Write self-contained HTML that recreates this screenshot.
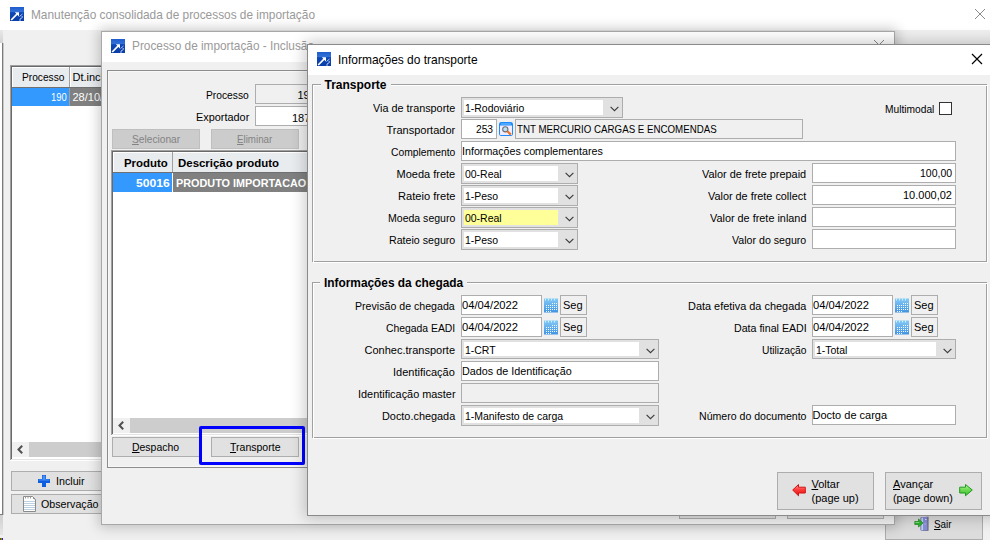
<!DOCTYPE html>
<html><head><meta charset="utf-8"><style>
html,body{margin:0;padding:0;width:990px;height:540px;overflow:hidden;background:#f0f0f0;}
body{position:relative;font-family:"Liberation Sans",sans-serif;}
.a{position:absolute;box-sizing:border-box;}
.t{position:absolute;white-space:nowrap;line-height:20px;transform-origin:0 0;}
u{text-decoration:underline;text-underline-offset:1px;}
</style></head><body>
<div class="a" style="left:0px;top:0px;width:990px;height:30px;background:#ffffff;"></div>
<div class="a" style="left:0px;top:30px;width:990px;height:510px;background:#f0f0f0;"></div>
<svg class="a" style="left:10px;top:7px" width="14" height="14" viewBox="0 0 14 14"><defs><linearGradient id="ig" x1="0" y1="0" x2="0" y2="1"><stop offset="0" stop-color="#1f5ccc"/><stop offset=".35" stop-color="#3472d8"/><stop offset=".4" stop-color="#0d47b5"/><stop offset="1" stop-color="#0a3ea6"/></linearGradient></defs><rect width="14" height="14" fill="url(#ig)"/><path d="M1.2 13 L7.5 6.7" stroke="#fff" stroke-width="1.7"/><path d="M4.8 5.2 H9 V9.4 Z" fill="#fff"/><path d="M9.5 9.5 l3 -2.5 M10 12 l2.5 -1.5 M9 13 h2 M11.5 9.8 l1.5 0" stroke="#c5d3f5" stroke-width="1" opacity=".9"/></svg>
<div class="t" style="left:30.5px;top:5px;font-size:13px;color:#9a9a9a;transform:scaleX(0.9117);">Manutenção consolidada de processos de importação</div>
<svg class="a" style="left:974.0px;top:8.0px" width="12" height="12"><path d="M1 1 L11 11 M11 1 L1 11" stroke="#8a8a8a" stroke-width="1"/></svg>
<div class="a" style="left:0px;top:30px;width:3px;height:13px;background:linear-gradient(#e8e8e8,#d4d4d4);"></div>
<div class="a" style="left:0px;top:43px;width:2px;height:472px;background:#ffffff;"></div>
<div class="a" style="left:2px;top:43px;width:1px;height:472px;background:#7a7a7a;"></div>
<div class="a" style="left:3px;top:43px;width:1px;height:472px;background:#c8c8c8;"></div>
<div class="a" style="left:0px;top:514px;width:3px;height:1px;background:#7a7a7a;"></div>
<div class="a" style="left:0px;top:515px;width:3px;height:20px;background:linear-gradient(#cfcfcf,#e6e6e6);"></div>
<div class="a" style="left:0px;top:538px;width:1px;height:2px;background:#e02020;"></div>
<div class="a" style="left:1px;top:538px;width:1px;height:2px;background:#20c020;"></div>
<div class="a" style="left:2px;top:538px;width:1px;height:2px;background:#2020e0;"></div>
<div class="a" style="left:10px;top:65px;width:110px;height:396px;background:#fff;"></div>
<div class="a" style="left:10px;top:65px;width:110px;height:1px;background:#a0a0a0;"></div>
<div class="a" style="left:10px;top:65px;width:1px;height:396px;background:#a0a0a0;"></div>
<div class="a" style="left:11px;top:66px;width:108px;height:1px;background:#696969;"></div>
<div class="a" style="left:11px;top:66px;width:1px;height:394px;background:#696969;"></div>
<div class="a" style="left:10px;top:460px;width:110px;height:1px;background:#ffffff;"></div>
<div class="a" style="left:119px;top:65px;width:1px;height:396px;background:#ffffff;"></div>
<div class="a" style="left:11px;top:459px;width:108px;height:1px;background:#e3e3e3;"></div>
<div class="a" style="left:118px;top:66px;width:1px;height:394px;background:#e3e3e3;"></div>
<div class="a" style="left:12px;top:67px;width:89px;height:21px;background:#e9ecef;"></div>
<div class="a" style="left:12px;top:67px;width:89px;height:1px;background:#fff;"></div>
<div class="a" style="left:12px;top:67px;width:1px;height:21px;background:#fff;"></div>
<div class="a" style="left:69px;top:67px;width:1px;height:21px;background:#a0a0a0;"></div>
<div class="a" style="left:70px;top:67px;width:1px;height:21px;background:#fff;"></div>
<div class="a" style="left:12px;top:87px;width:89px;height:1px;background:#707070;"></div>
<div class="t" style="left:22.0px;top:67px;font-size:11px;color:#000;transform:scaleX(0.9259);">Processo</div>
<div class="t" style="left:72.5px;top:67px;font-size:11px;color:#000;">Dt.inclusão</div>
<div class="a" style="left:12px;top:88px;width:57px;height:18px;background:#3399ff;"></div>
<div class="a" style="left:70px;top:88px;width:31px;height:18px;background:#808080;"></div>
<div class="a" style="left:69px;top:88px;width:1px;height:18px;background:#a0a0a0;"></div>
<div class="t" style="left:50.5px;top:87px;font-size:11px;color:#fff;transform:scaleX(0.8533);">190</div>
<div class="t" style="left:72.5px;top:87px;font-size:11px;color:#fff;">28/10/2022</div>
<div class="a" style="left:12px;top:442px;width:89px;height:15px;background:#f0f0f0;"></div>
<div class="a" style="left:29px;top:442px;width:72px;height:15px;background:#cdcdcd;"></div>
<svg class="a" style="left:17px;top:445px" width="6" height="9"><path d="M5.2 0.8 L1.5 4.5 L5.2 8.2" fill="none" stroke="#505050" stroke-width="2"/></svg>
<div class="a" style="left:11px;top:471px;width:99px;height:20px;background:#e1e1e1;box-shadow:inset 0 0 0 1px #adadad;"></div>
<svg class="a" style="left:38px;top:475px" width="12" height="12" viewBox="0 0 12 12"><path d="M4 0 H8 V4 H12 V8 H8 V12 H4 V8 H0 V4 H4 Z" fill="#0d5fe0"/><path d="M4.6 0.6 H7.4 V4.6 H11.4 V5.6 H0.6 V4.6 H4.6 Z" fill="#4a8ef0"/></svg>
<div class="t" style="left:55.5px;top:471px;font-size:11px;color:#000;transform:scaleX(0.9727);">Incluir</div>
<div class="a" style="left:11px;top:494px;width:99px;height:20px;background:#e1e1e1;box-shadow:inset 0 0 0 1px #adadad;"></div>
<svg class="a" style="left:23px;top:496px" width="14" height="17" viewBox="0 0 14 17"><path d="M0.5 0.5 H9.5 L12.5 3.5 V15.5 H0.5 Z" fill="#fff" stroke="#8a8a8a"/><path d="M1 5.5h11 M1 7.5h11 M1 9.5h11 M1 11.5h11 M1 13.5h11" stroke="#bcd0e2" stroke-width="1"/><path d="M2.5 0.5 v2 M5 0.5 v2 M7.5 0.5 v2 M10 2 l1.5 1.5" stroke="#9a9a9a" stroke-width="1"/></svg>
<div class="t" style="left:40.5px;top:494px;font-size:11px;color:#000;transform:scaleX(0.9696);">Observação</div>
<div class="a" style="left:885px;top:515px;width:98px;height:25px;background:#dcdcdc;box-shadow:inset 0 0 0 1px #adadad;"></div>
<svg class="a" style="left:914px;top:516px" width="17" height="16" viewBox="0 0 17 16"><path d="M6.5 1.5 L14.5 0.8 V14.8 L7.5 15 L6.5 14 Z" fill="#5a5a6e"/><path d="M7 1.2 L13.5 0.8 V14.2 L7 15 Z" fill="#8a8fd6"/><path d="M7.5 2 L9 1.8 V14 L7.5 14.5 Z" fill="#b9d8f5"/><rect x="11" y="3" width="1.6" height=".9" fill="#e0e4ff"/><rect x="10.5" y="7.5" width="1" height="1" fill="#d0d4f0"/><path d="M0.8 5.5 H4.5 V3 L9 7 L4.5 11 V8.5 H0.8 Z" fill="#2fb52f" stroke="#178a17" stroke-width=".7"/><path d="M1.5 6.5 H5.2" stroke="#8fe88f" stroke-width=".8"/></svg>
<div class="t" style="left:934.0px;top:514px;font-size:11px;color:#000;transform:scaleX(0.8980);"><u>S</u>air</div>
<div class="a" style="left:101px;top:31px;width:794px;height:494px;box-shadow:0 0 12px 2px rgba(0,0,0,.22)"></div>
<div class="a" style="left:101px;top:31px;width:794px;height:494px;background:#f0f0f0;box-shadow:inset 0 0 0 1px #a8a8a8;"></div>
<div class="a" style="left:102px;top:32px;width:792px;height:30px;background:#ffffff;"></div>
<svg class="a" style="left:111px;top:39px" width="14" height="14" viewBox="0 0 14 14"><defs><linearGradient id="ig" x1="0" y1="0" x2="0" y2="1"><stop offset="0" stop-color="#1f5ccc"/><stop offset=".35" stop-color="#3472d8"/><stop offset=".4" stop-color="#0d47b5"/><stop offset="1" stop-color="#0a3ea6"/></linearGradient></defs><rect width="14" height="14" fill="url(#ig)"/><path d="M1.2 13 L7.5 6.7" stroke="#fff" stroke-width="1.7"/><path d="M4.8 5.2 H9 V9.4 Z" fill="#fff"/><path d="M9.5 9.5 l3 -2.5 M10 12 l2.5 -1.5 M9 13 h2 M11.5 9.8 l1.5 0" stroke="#c5d3f5" stroke-width="1" opacity=".9"/></svg>
<div class="t" style="left:131.5px;top:36px;font-size:13px;color:#9a9a9a;transform:scaleX(0.9092);">Processo de importação - Inclusão</div>
<svg class="a" style="left:873.0px;top:39.0px" width="12" height="12"><path d="M1 1 L11 11 M11 1 L1 11" stroke="#888" stroke-width="1"/></svg>
<div class="a" style="left:107px;top:70px;width:782px;height:398px;box-shadow:inset 0 0 0 1px #8c8c8c;"></div>
<div class="a" style="left:108px;top:71px;width:781px;height:396px;box-shadow:inset 0 0 0 1px #f8f8f8;"></div>
<div class="t" style="left:206.0px;top:85px;font-size:11px;color:#000;transform:scaleX(0.9314);">Processo</div>
<div class="a" style="left:255px;top:84px;width:145px;height:20px;background:#f0f0f0;box-shadow:inset 0 0 0 1px #adadad;"></div>
<div class="t" style="left:297.5px;top:85px;font-size:11px;color:#000;">190</div>
<div class="t" style="left:195.5px;top:107px;font-size:11px;color:#000;transform:scaleX(0.9898);">Exportador</div>
<div class="a" style="left:255px;top:106px;width:145px;height:20px;background:#ffffff;box-shadow:inset 0 0 0 1px #adadad;"></div>
<div class="t" style="left:292.0px;top:108px;font-size:11px;color:#000;">187</div>
<div class="a" style="left:112px;top:129px;width:88px;height:20px;background:#cccccc;box-shadow:inset 0 0 0 1px #bfbfbf;"></div>
<div class="t" style="left:132.0px;top:129px;font-size:11px;color:#838383;transform:scaleX(0.9269);"><u>S</u>elecionar</div>
<div class="a" style="left:211px;top:129px;width:88px;height:20px;background:#cccccc;box-shadow:inset 0 0 0 1px #bfbfbf;"></div>
<div class="t" style="left:237.0px;top:129px;font-size:11px;color:#838383;transform:scaleX(0.8866);"><u>E</u>liminar</div>
<div class="a" style="left:111px;top:150px;width:778px;height:286px;background:#fff;"></div>
<div class="a" style="left:111px;top:150px;width:778px;height:1px;background:#a0a0a0;"></div>
<div class="a" style="left:111px;top:150px;width:1px;height:286px;background:#a0a0a0;"></div>
<div class="a" style="left:112px;top:151px;width:776px;height:1px;background:#696969;"></div>
<div class="a" style="left:112px;top:151px;width:1px;height:284px;background:#696969;"></div>
<div class="a" style="left:111px;top:435px;width:778px;height:1px;background:#ffffff;"></div>
<div class="a" style="left:888px;top:150px;width:1px;height:286px;background:#ffffff;"></div>
<div class="a" style="left:112px;top:434px;width:776px;height:1px;background:#e3e3e3;"></div>
<div class="a" style="left:887px;top:151px;width:1px;height:284px;background:#e3e3e3;"></div>
<div class="a" style="left:113px;top:152px;width:776px;height:21px;background:#e9ecef;"></div>
<div class="a" style="left:113px;top:152px;width:776px;height:1px;background:#fff;"></div>
<div class="a" style="left:113px;top:152px;width:1px;height:21px;background:#fff;"></div>
<div class="a" style="left:172px;top:152px;width:1px;height:21px;background:#a0a0a0;"></div>
<div class="a" style="left:113px;top:172px;width:776px;height:1px;background:#707070;"></div>
<div class="t" style="left:124.0px;top:153px;font-size:11px;color:#000;font-weight:bold;transform:scaleX(1.0379);">Produto</div>
<div class="t" style="left:178.0px;top:153px;font-size:11px;color:#000;font-weight:bold;transform:scaleX(1.0401);">Descrição produto</div>
<div class="a" style="left:113px;top:173px;width:59px;height:19px;background:#3399ff;"></div>
<div class="a" style="left:173px;top:173px;width:716px;height:19px;background:#808080;"></div>
<div class="t" style="left:136.0px;top:173px;font-size:11px;color:#fff;font-weight:bold;transform:scaleX(1.1013);">50016</div>
<div class="t" style="left:175.5px;top:173px;font-size:11px;color:#fff;font-weight:bold;transform:scaleX(0.9850);">PRODUTO IMPORTACAO</div>
<div class="a" style="left:113px;top:418px;width:776px;height:15px;background:#f0f0f0;"></div>
<div class="a" style="left:130px;top:418px;width:759px;height:15px;background:#cdcdcd;"></div>
<svg class="a" style="left:118px;top:421px" width="6" height="9"><path d="M5.2 0.8 L1.5 4.5 L5.2 8.2" fill="none" stroke="#505050" stroke-width="2"/></svg>
<div class="a" style="left:112px;top:437px;width:88px;height:20px;background:#e1e1e1;box-shadow:inset 0 0 0 1px #adadad;"></div>
<div class="t" style="left:132.0px;top:437px;font-size:11px;color:#000;transform:scaleX(0.9495);"><u>D</u>espacho</div>
<div class="a" style="left:211px;top:437px;width:88px;height:20px;background:#e1e1e1;box-shadow:inset 0 0 0 1px #adadad;"></div>
<div class="t" style="left:229.5px;top:437px;font-size:11px;color:#000;transform:scaleX(0.9564);"><u>T</u>ransporte</div>
<div class="a" style="left:199px;top:426px;width:106px;height:39px;box-shadow:inset 0 0 0 3px #0000ff;border-radius:2px;"></div>
<div class="a" style="left:679px;top:500px;width:97px;height:19px;background:#e1e1e1;box-shadow:inset 0 0 0 1px #adadad;"></div>
<div class="a" style="left:787px;top:500px;width:97px;height:19px;background:#e1e1e1;box-shadow:inset 0 0 0 1px #adadad;"></div>
<div class="a" style="left:307px;top:44px;width:700px;height:472px;box-shadow:0 0 14px 2px rgba(0,0,0,.22)"></div>
<div class="a" style="left:307px;top:44px;width:693px;height:472px;background:#f0f0f0;box-shadow:inset 0 0 0 1px #8a8a8a;"></div>
<div class="a" style="left:308px;top:45px;width:682px;height:30px;background:#ffffff;"></div>
<svg class="a" style="left:317px;top:52px" width="14" height="14" viewBox="0 0 14 14"><defs><linearGradient id="ig" x1="0" y1="0" x2="0" y2="1"><stop offset="0" stop-color="#1f5ccc"/><stop offset=".35" stop-color="#3472d8"/><stop offset=".4" stop-color="#0d47b5"/><stop offset="1" stop-color="#0a3ea6"/></linearGradient></defs><rect width="14" height="14" fill="url(#ig)"/><path d="M1.2 13 L7.5 6.7" stroke="#fff" stroke-width="1.7"/><path d="M4.8 5.2 H9 V9.4 Z" fill="#fff"/><path d="M9.5 9.5 l3 -2.5 M10 12 l2.5 -1.5 M9 13 h2 M11.5 9.8 l1.5 0" stroke="#c5d3f5" stroke-width="1" opacity=".9"/></svg>
<div class="t" style="left:337.5px;top:50px;font-size:13px;color:#000;transform:scaleX(0.9196);">Informações do transporte</div>
<svg class="a" style="left:971.0px;top:53.0px" width="12" height="12"><path d="M1 1 L11 11 M11 1 L1 11" stroke="#000" stroke-width="1.2"/></svg>
<div class="a" style="left:312px;top:84px;width:675px;height:178px;box-shadow:inset 0 0 0 1px #a0a0a0;"></div>
<div class="a" style="left:313px;top:85px;width:675px;height:178px;box-shadow:inset 0 0 0 1px #ffffff;z-index:0"></div>
<div class="a" style="left:320.5px;top:78px;width:70.0px;height:9px;background:#f0f0f0;"></div>
<div class="t" style="left:324.5px;top:75px;font-size:12px;color:#000;font-weight:bold;">Transporte</div>
<div class="t" style="left:372.5px;top:98px;font-size:11px;color:#000;transform:scaleX(0.9844);">Via de transporte</div>
<div class="t" style="left:386.5px;top:120px;font-size:11px;color:#000;">Transportador</div>
<div class="t" style="left:391.0px;top:142px;font-size:11px;color:#000;transform:scaleX(0.9380);">Complemento</div>
<div class="t" style="left:396.5px;top:164px;font-size:11px;color:#000;">Moeda frete</div>
<div class="t" style="left:397.5px;top:186px;font-size:11px;color:#000;transform:scaleX(1.0105);">Rateio frete</div>
<div class="t" style="left:387.5px;top:208px;font-size:11px;color:#000;transform:scaleX(0.9573);">Moeda seguro</div>
<div class="t" style="left:388.5px;top:230px;font-size:11px;color:#000;transform:scaleX(0.9679);">Rateio seguro</div>
<div class="a" style="left:461px;top:97px;width:162px;height:21px;background:#e1e1e1;box-shadow:inset 0 0 0 1px #adadad;"></div>
<div class="a" style="left:464px;top:100px;width:139px;height:15px;background:#fff;"></div>
<svg class="a" style="left:609.5px;top:106.0px" width="9" height="6"><path d="M0.6 0.8 L4.5 4.6 L8.4 0.8" fill="none" stroke="#3c3c3c" stroke-width="1.15"/></svg>
<div class="t" style="left:465.0px;top:98px;font-size:11px;color:#000;transform:scaleX(0.9500);">1-Rodoviário</div>
<div class="a" style="left:461px;top:119px;width:36px;height:20px;background:#fff;box-shadow:inset 0 0 0 1px #adadad;"></div>
<div class="t" style="left:476.0px;top:119px;font-size:11px;color:#000;transform:scaleX(0.9293);">253</div>
<svg class="a" style="left:499px;top:122px" width="14" height="14" viewBox="0 0 14 14"><rect x="0.5" y="0.5" width="13" height="13" rx="1.2" fill="#f1ecff" stroke="#1a8cff"/><rect x="1" y="1" width="12" height="2.5" fill="#1a8cff"/><path d="M2 2 H12" stroke="#9cd0ff" stroke-width=".8"/><circle cx="6.3" cy="7.3" r="2.6" fill="#b8e4fa" stroke="#6e6e6e" stroke-width="1.1"/><path d="M8.3 9.3 L11.8 12.6" stroke="#f0701e" stroke-width="2.2"/></svg>
<div class="a" style="left:515px;top:119px;width:288px;height:20px;background:#f0f0f0;box-shadow:inset 0 0 0 1px #adadad;"></div>
<div class="t" style="left:516.5px;top:119px;font-size:11px;color:#000;transform:scaleX(0.8840);">TNT MERCURIO CARGAS E ENCOMENDAS</div>
<div class="a" style="left:461px;top:141px;width:495px;height:20px;background:#fff;box-shadow:inset 0 0 0 1px #adadad;"></div>
<div class="t" style="left:461.5px;top:141px;font-size:11px;color:#000;transform:scaleX(0.9717);">Informações complementares</div>
<div class="a" style="left:461px;top:163px;width:117px;height:21px;background:#e1e1e1;box-shadow:inset 0 0 0 1px #adadad;"></div>
<div class="a" style="left:464px;top:166px;width:94px;height:15px;background:#fff;"></div>
<svg class="a" style="left:564.5px;top:172.0px" width="9" height="6"><path d="M0.6 0.8 L4.5 4.6 L8.4 0.8" fill="none" stroke="#3c3c3c" stroke-width="1.15"/></svg>
<div class="t" style="left:465.0px;top:164px;font-size:11px;color:#000;transform:scaleX(0.9500);">00-Real</div>
<div class="a" style="left:461px;top:185px;width:117px;height:21px;background:#e1e1e1;box-shadow:inset 0 0 0 1px #adadad;"></div>
<div class="a" style="left:464px;top:188px;width:94px;height:15px;background:#fff;"></div>
<svg class="a" style="left:564.5px;top:194.0px" width="9" height="6"><path d="M0.6 0.8 L4.5 4.6 L8.4 0.8" fill="none" stroke="#3c3c3c" stroke-width="1.15"/></svg>
<div class="t" style="left:465.0px;top:186px;font-size:11px;color:#000;transform:scaleX(0.9500);">1-Peso</div>
<div class="a" style="left:461px;top:207px;width:117px;height:21px;background:#e1e1e1;box-shadow:inset 0 0 0 1px #adadad;"></div>
<div class="a" style="left:464px;top:210px;width:94px;height:15px;background:#ffff99;"></div>
<svg class="a" style="left:564.5px;top:216.0px" width="9" height="6"><path d="M0.6 0.8 L4.5 4.6 L8.4 0.8" fill="none" stroke="#3c3c3c" stroke-width="1.15"/></svg>
<div class="t" style="left:465.0px;top:208px;font-size:11px;color:#000;transform:scaleX(0.9500);">00-Real</div>
<div class="a" style="left:461px;top:229px;width:117px;height:21px;background:#e1e1e1;box-shadow:inset 0 0 0 1px #adadad;"></div>
<div class="a" style="left:464px;top:232px;width:94px;height:15px;background:#fff;"></div>
<svg class="a" style="left:564.5px;top:238.0px" width="9" height="6"><path d="M0.6 0.8 L4.5 4.6 L8.4 0.8" fill="none" stroke="#3c3c3c" stroke-width="1.15"/></svg>
<div class="t" style="left:465.0px;top:230px;font-size:11px;color:#000;transform:scaleX(0.9500);">1-Peso</div>
<div class="t" style="left:884.5px;top:99px;font-size:11px;color:#000;transform:scaleX(0.9286);">Multimodal</div>
<div class="a" style="left:939px;top:102px;width:13px;height:13px;background:#ffffff;box-shadow:inset 0 0 0 1px #333333;"></div>
<div class="t" style="left:702.0px;top:164px;font-size:11px;color:#000;transform:scaleX(0.9924);">Valor de frete prepaid</div>
<div class="t" style="left:708.0px;top:186px;font-size:11px;color:#000;transform:scaleX(0.9869);">Valor de frete collect</div>
<div class="t" style="left:709.5px;top:208px;font-size:11px;color:#000;transform:scaleX(0.9877);">Valor de frete inland</div>
<div class="t" style="left:732.0px;top:230px;font-size:11px;color:#000;transform:scaleX(0.9661);">Valor do seguro</div>
<div class="a" style="left:812px;top:163px;width:144px;height:20px;background:#fff;box-shadow:inset 0 0 0 1px #adadad;"></div>
<div class="a" style="left:812px;top:185px;width:144px;height:20px;background:#fff;box-shadow:inset 0 0 0 1px #adadad;"></div>
<div class="a" style="left:812px;top:207px;width:144px;height:20px;background:#fff;box-shadow:inset 0 0 0 1px #adadad;"></div>
<div class="a" style="left:812px;top:229px;width:144px;height:20px;background:#fff;box-shadow:inset 0 0 0 1px #adadad;"></div>
<div class="t" style="left:920.0px;top:163px;font-size:11px;color:#000;transform:scaleX(0.9524);">100,00</div>
<div class="t" style="left:903.0px;top:185px;font-size:11px;color:#000;">10.000,02</div>
<div class="a" style="left:312px;top:282px;width:675px;height:156px;box-shadow:inset 0 0 0 1px #a0a0a0;"></div>
<div class="a" style="left:313px;top:283px;width:675px;height:156px;box-shadow:inset 0 0 0 1px #ffffff;z-index:0"></div>
<div class="a" style="left:320px;top:276px;width:147.25px;height:9px;background:#f0f0f0;"></div>
<div class="t" style="left:324.0px;top:273px;font-size:12px;color:#000;font-weight:bold;transform:scaleX(0.9890);">Informações da chegada</div>
<div class="t" style="left:355.0px;top:296px;font-size:11px;color:#000;transform:scaleX(0.9647);">Previsão de chegada</div>
<div class="t" style="left:386.0px;top:318px;font-size:11px;color:#000;transform:scaleX(0.9435);">Chegada EADI</div>
<div class="t" style="left:364.5px;top:340px;font-size:11px;color:#000;">Conhec.transporte</div>
<div class="t" style="left:393.0px;top:362px;font-size:11px;color:#000;">Identificação</div>
<div class="t" style="left:357.5px;top:384px;font-size:11px;color:#000;transform:scaleX(0.9909);">Identificação master</div>
<div class="t" style="left:381.5px;top:406px;font-size:11px;color:#000;transform:scaleX(0.9892);">Docto.chegada</div>
<div class="a" style="left:461px;top:295px;width:81px;height:20px;background:#fff;box-shadow:inset 0 0 0 1px #adadad;"></div>
<div class="t" style="left:461.5px;top:295px;font-size:11px;color:#000;transform:scaleX(1.0181);">04/04/2022</div>
<svg class="a" style="left:544px;top:298px" width="14" height="15" viewBox="0 0 14 15"><defs><linearGradient id="cg" x1="0" y1="0" x2="0" y2="1"><stop offset="0" stop-color="#86c9f6"/><stop offset="1" stop-color="#4194e2"/></linearGradient></defs><rect x="0" y="0.5" width="14" height="14" fill="url(#cg)"/><g fill="#c8f4ff"><rect x="1" y="0.5" width="1" height="2"/><rect x="4" y="0.5" width="1" height="2"/><rect x="7" y="0.5" width="1" height="2"/><rect x="10" y="0.5" width="1" height="2"/></g><g fill="#f0faff"><rect x="8" y="5" width="1" height="1"/><rect x="10" y="5" width="1" height="1"/><rect x="12" y="5" width="1" height="1"/><rect x="2" y="7" width="1" height="1"/><rect x="4" y="7" width="1" height="1"/><rect x="6" y="7" width="1" height="1"/><rect x="8" y="7" width="1" height="1"/><rect x="10" y="7" width="1" height="1"/><rect x="12" y="7" width="1" height="1"/><rect x="2" y="9" width="1" height="1"/><rect x="4" y="9" width="1" height="1"/><rect x="6" y="9" width="1" height="1"/><rect x="8" y="9" width="1" height="1"/><rect x="10" y="9" width="1" height="1"/><rect x="12" y="9" width="1" height="1"/><rect x="2" y="11" width="1" height="1"/><rect x="4" y="11" width="1" height="1"/><rect x="6" y="11" width="1" height="1"/><rect x="8" y="11" width="1" height="1"/><rect x="10" y="11" width="1" height="1"/><rect x="12" y="11" width="1" height="1"/><rect x="2" y="13" width="1" height="1"/><rect x="4" y="13" width="1" height="1"/><rect x="6" y="13" width="1" height="1"/></g></svg>
<div class="a" style="left:560px;top:295px;width:27px;height:20px;background:#f0f0f0;box-shadow:inset 0 0 0 1px #adadad;"></div>
<div class="t" style="left:563.0px;top:295px;font-size:11px;color:#000;">Seg</div>
<div class="a" style="left:461px;top:317px;width:81px;height:20px;background:#fff;box-shadow:inset 0 0 0 1px #adadad;"></div>
<div class="t" style="left:461.5px;top:317px;font-size:11px;color:#000;transform:scaleX(1.0181);">04/04/2022</div>
<svg class="a" style="left:544px;top:320px" width="14" height="15" viewBox="0 0 14 15"><defs><linearGradient id="cg" x1="0" y1="0" x2="0" y2="1"><stop offset="0" stop-color="#86c9f6"/><stop offset="1" stop-color="#4194e2"/></linearGradient></defs><rect x="0" y="0.5" width="14" height="14" fill="url(#cg)"/><g fill="#c8f4ff"><rect x="1" y="0.5" width="1" height="2"/><rect x="4" y="0.5" width="1" height="2"/><rect x="7" y="0.5" width="1" height="2"/><rect x="10" y="0.5" width="1" height="2"/></g><g fill="#f0faff"><rect x="8" y="5" width="1" height="1"/><rect x="10" y="5" width="1" height="1"/><rect x="12" y="5" width="1" height="1"/><rect x="2" y="7" width="1" height="1"/><rect x="4" y="7" width="1" height="1"/><rect x="6" y="7" width="1" height="1"/><rect x="8" y="7" width="1" height="1"/><rect x="10" y="7" width="1" height="1"/><rect x="12" y="7" width="1" height="1"/><rect x="2" y="9" width="1" height="1"/><rect x="4" y="9" width="1" height="1"/><rect x="6" y="9" width="1" height="1"/><rect x="8" y="9" width="1" height="1"/><rect x="10" y="9" width="1" height="1"/><rect x="12" y="9" width="1" height="1"/><rect x="2" y="11" width="1" height="1"/><rect x="4" y="11" width="1" height="1"/><rect x="6" y="11" width="1" height="1"/><rect x="8" y="11" width="1" height="1"/><rect x="10" y="11" width="1" height="1"/><rect x="12" y="11" width="1" height="1"/><rect x="2" y="13" width="1" height="1"/><rect x="4" y="13" width="1" height="1"/><rect x="6" y="13" width="1" height="1"/></g></svg>
<div class="a" style="left:560px;top:317px;width:27px;height:20px;background:#f0f0f0;box-shadow:inset 0 0 0 1px #adadad;"></div>
<div class="t" style="left:563.0px;top:317px;font-size:11px;color:#000;">Seg</div>
<div class="a" style="left:461px;top:339px;width:198px;height:20px;background:#e1e1e1;box-shadow:inset 0 0 0 1px #adadad;"></div>
<div class="a" style="left:464px;top:342px;width:175px;height:14px;background:#fff;"></div>
<svg class="a" style="left:645.5px;top:347.5px" width="9" height="6"><path d="M0.6 0.8 L4.5 4.6 L8.4 0.8" fill="none" stroke="#3c3c3c" stroke-width="1.15"/></svg>
<div class="t" style="left:465.0px;top:340px;font-size:11px;color:#000;transform:scaleX(0.9500);">1-CRT</div>
<div class="a" style="left:461px;top:361px;width:198px;height:20px;background:#fff;box-shadow:inset 0 0 0 1px #adadad;"></div>
<div class="t" style="left:461.5px;top:361px;font-size:11px;color:#000;transform:scaleX(0.9803);">Dados de Identificação</div>
<div class="a" style="left:461px;top:383px;width:198px;height:20px;background:#f0f0f0;box-shadow:inset 0 0 0 1px #adadad;"></div>
<div class="a" style="left:461px;top:405px;width:198px;height:21px;background:#e1e1e1;box-shadow:inset 0 0 0 1px #adadad;"></div>
<div class="a" style="left:464px;top:408px;width:175px;height:15px;background:#fff;"></div>
<svg class="a" style="left:645.5px;top:414.0px" width="9" height="6"><path d="M0.6 0.8 L4.5 4.6 L8.4 0.8" fill="none" stroke="#3c3c3c" stroke-width="1.15"/></svg>
<div class="t" style="left:465.0px;top:406px;font-size:11px;color:#000;transform:scaleX(0.9500);">1-Manifesto de carga</div>
<div class="t" style="left:687.5px;top:296px;font-size:11px;color:#000;transform:scaleX(0.9925);">Data efetiva da chegada</div>
<div class="t" style="left:733.5px;top:318px;font-size:11px;color:#000;transform:scaleX(0.9668);">Data final EADI</div>
<div class="t" style="left:761.5px;top:340px;font-size:11px;color:#000;transform:scaleX(0.9329);">Utilização</div>
<div class="t" style="left:698.5px;top:406px;font-size:11px;color:#000;transform:scaleX(0.9607);">Número do documento</div>
<div class="a" style="left:812px;top:295px;width:81px;height:20px;background:#fff;box-shadow:inset 0 0 0 1px #adadad;"></div>
<div class="t" style="left:812.5px;top:295px;font-size:11px;color:#000;transform:scaleX(1.0181);">04/04/2022</div>
<svg class="a" style="left:895px;top:298px" width="14" height="15" viewBox="0 0 14 15"><defs><linearGradient id="cg" x1="0" y1="0" x2="0" y2="1"><stop offset="0" stop-color="#86c9f6"/><stop offset="1" stop-color="#4194e2"/></linearGradient></defs><rect x="0" y="0.5" width="14" height="14" fill="url(#cg)"/><g fill="#c8f4ff"><rect x="1" y="0.5" width="1" height="2"/><rect x="4" y="0.5" width="1" height="2"/><rect x="7" y="0.5" width="1" height="2"/><rect x="10" y="0.5" width="1" height="2"/></g><g fill="#f0faff"><rect x="8" y="5" width="1" height="1"/><rect x="10" y="5" width="1" height="1"/><rect x="12" y="5" width="1" height="1"/><rect x="2" y="7" width="1" height="1"/><rect x="4" y="7" width="1" height="1"/><rect x="6" y="7" width="1" height="1"/><rect x="8" y="7" width="1" height="1"/><rect x="10" y="7" width="1" height="1"/><rect x="12" y="7" width="1" height="1"/><rect x="2" y="9" width="1" height="1"/><rect x="4" y="9" width="1" height="1"/><rect x="6" y="9" width="1" height="1"/><rect x="8" y="9" width="1" height="1"/><rect x="10" y="9" width="1" height="1"/><rect x="12" y="9" width="1" height="1"/><rect x="2" y="11" width="1" height="1"/><rect x="4" y="11" width="1" height="1"/><rect x="6" y="11" width="1" height="1"/><rect x="8" y="11" width="1" height="1"/><rect x="10" y="11" width="1" height="1"/><rect x="12" y="11" width="1" height="1"/><rect x="2" y="13" width="1" height="1"/><rect x="4" y="13" width="1" height="1"/><rect x="6" y="13" width="1" height="1"/></g></svg>
<div class="a" style="left:911px;top:295px;width:27px;height:20px;background:#f0f0f0;box-shadow:inset 0 0 0 1px #adadad;"></div>
<div class="t" style="left:914.0px;top:295px;font-size:11px;color:#000;">Seg</div>
<div class="a" style="left:812px;top:317px;width:81px;height:20px;background:#fff;box-shadow:inset 0 0 0 1px #adadad;"></div>
<div class="t" style="left:812.5px;top:317px;font-size:11px;color:#000;transform:scaleX(1.0181);">04/04/2022</div>
<svg class="a" style="left:895px;top:320px" width="14" height="15" viewBox="0 0 14 15"><defs><linearGradient id="cg" x1="0" y1="0" x2="0" y2="1"><stop offset="0" stop-color="#86c9f6"/><stop offset="1" stop-color="#4194e2"/></linearGradient></defs><rect x="0" y="0.5" width="14" height="14" fill="url(#cg)"/><g fill="#c8f4ff"><rect x="1" y="0.5" width="1" height="2"/><rect x="4" y="0.5" width="1" height="2"/><rect x="7" y="0.5" width="1" height="2"/><rect x="10" y="0.5" width="1" height="2"/></g><g fill="#f0faff"><rect x="8" y="5" width="1" height="1"/><rect x="10" y="5" width="1" height="1"/><rect x="12" y="5" width="1" height="1"/><rect x="2" y="7" width="1" height="1"/><rect x="4" y="7" width="1" height="1"/><rect x="6" y="7" width="1" height="1"/><rect x="8" y="7" width="1" height="1"/><rect x="10" y="7" width="1" height="1"/><rect x="12" y="7" width="1" height="1"/><rect x="2" y="9" width="1" height="1"/><rect x="4" y="9" width="1" height="1"/><rect x="6" y="9" width="1" height="1"/><rect x="8" y="9" width="1" height="1"/><rect x="10" y="9" width="1" height="1"/><rect x="12" y="9" width="1" height="1"/><rect x="2" y="11" width="1" height="1"/><rect x="4" y="11" width="1" height="1"/><rect x="6" y="11" width="1" height="1"/><rect x="8" y="11" width="1" height="1"/><rect x="10" y="11" width="1" height="1"/><rect x="12" y="11" width="1" height="1"/><rect x="2" y="13" width="1" height="1"/><rect x="4" y="13" width="1" height="1"/><rect x="6" y="13" width="1" height="1"/></g></svg>
<div class="a" style="left:911px;top:317px;width:27px;height:20px;background:#f0f0f0;box-shadow:inset 0 0 0 1px #adadad;"></div>
<div class="t" style="left:914.0px;top:317px;font-size:11px;color:#000;">Seg</div>
<div class="a" style="left:812px;top:339px;width:144px;height:20px;background:#e1e1e1;box-shadow:inset 0 0 0 1px #adadad;"></div>
<div class="a" style="left:815px;top:342px;width:121px;height:14px;background:#fff;"></div>
<svg class="a" style="left:942.5px;top:347.5px" width="9" height="6"><path d="M0.6 0.8 L4.5 4.6 L8.4 0.8" fill="none" stroke="#3c3c3c" stroke-width="1.15"/></svg>
<div class="t" style="left:816.0px;top:340px;font-size:11px;color:#000;transform:scaleX(0.9500);">1-Total</div>
<div class="a" style="left:812px;top:405px;width:144px;height:20px;background:#fff;box-shadow:inset 0 0 0 1px #adadad;"></div>
<div class="t" style="left:812.5px;top:405px;font-size:11px;color:#000;">Docto de carga</div>
<div class="a" style="left:777px;top:472px;width:97px;height:38px;background:#e1e1e1;box-shadow:inset 0 0 0 1px #adadad;"></div>
<svg class="a" style="left:792px;top:484px" width="14" height="13" viewBox="0 0 14 13"><defs><linearGradient id="rg" x1="0" y1="0" x2="0" y2="1"><stop offset="0" stop-color="#ff9a9a"/><stop offset=".45" stop-color="#ff3b3b"/><stop offset="1" stop-color="#e01010"/></linearGradient></defs><path d="M0.7 6 L6.5 0.5 V3.2 H13.3 V9 H6.5 V11.8 Z" fill="url(#rg)" stroke="#d01414" stroke-width="1"/></svg>
<div class="t" style="left:811.5px;top:474px;font-size:11px;color:#000;"><u>V</u>oltar</div>
<div class="t" style="left:811.5px;top:488px;font-size:11px;color:#000;">(page up)</div>
<div class="a" style="left:885px;top:472px;width:97px;height:38px;background:#e1e1e1;box-shadow:inset 0 0 0 1px #adadad;"></div>
<svg class="a" style="left:959px;top:484px" width="14" height="13" viewBox="0 0 14 13"><defs><linearGradient id="gg" x1="0" y1="0" x2="0" y2="1"><stop offset="0" stop-color="#b6f79a"/><stop offset=".45" stop-color="#6fdc55"/><stop offset="1" stop-color="#3fb82a"/></linearGradient></defs><path d="M13.3 6 L6.5 0.5 V3.2 H0.7 V9 H6.5 V11.8 Z" fill="url(#gg)" stroke="#1f9a1f" stroke-width="1"/></svg>
<div class="t" style="left:893.0px;top:474px;font-size:11px;color:#000;"><u>A</u>vançar</div>
<div class="t" style="left:893.0px;top:488px;font-size:11px;color:#000;transform:scaleX(0.9804);">(page down)</div>
</body></html>
